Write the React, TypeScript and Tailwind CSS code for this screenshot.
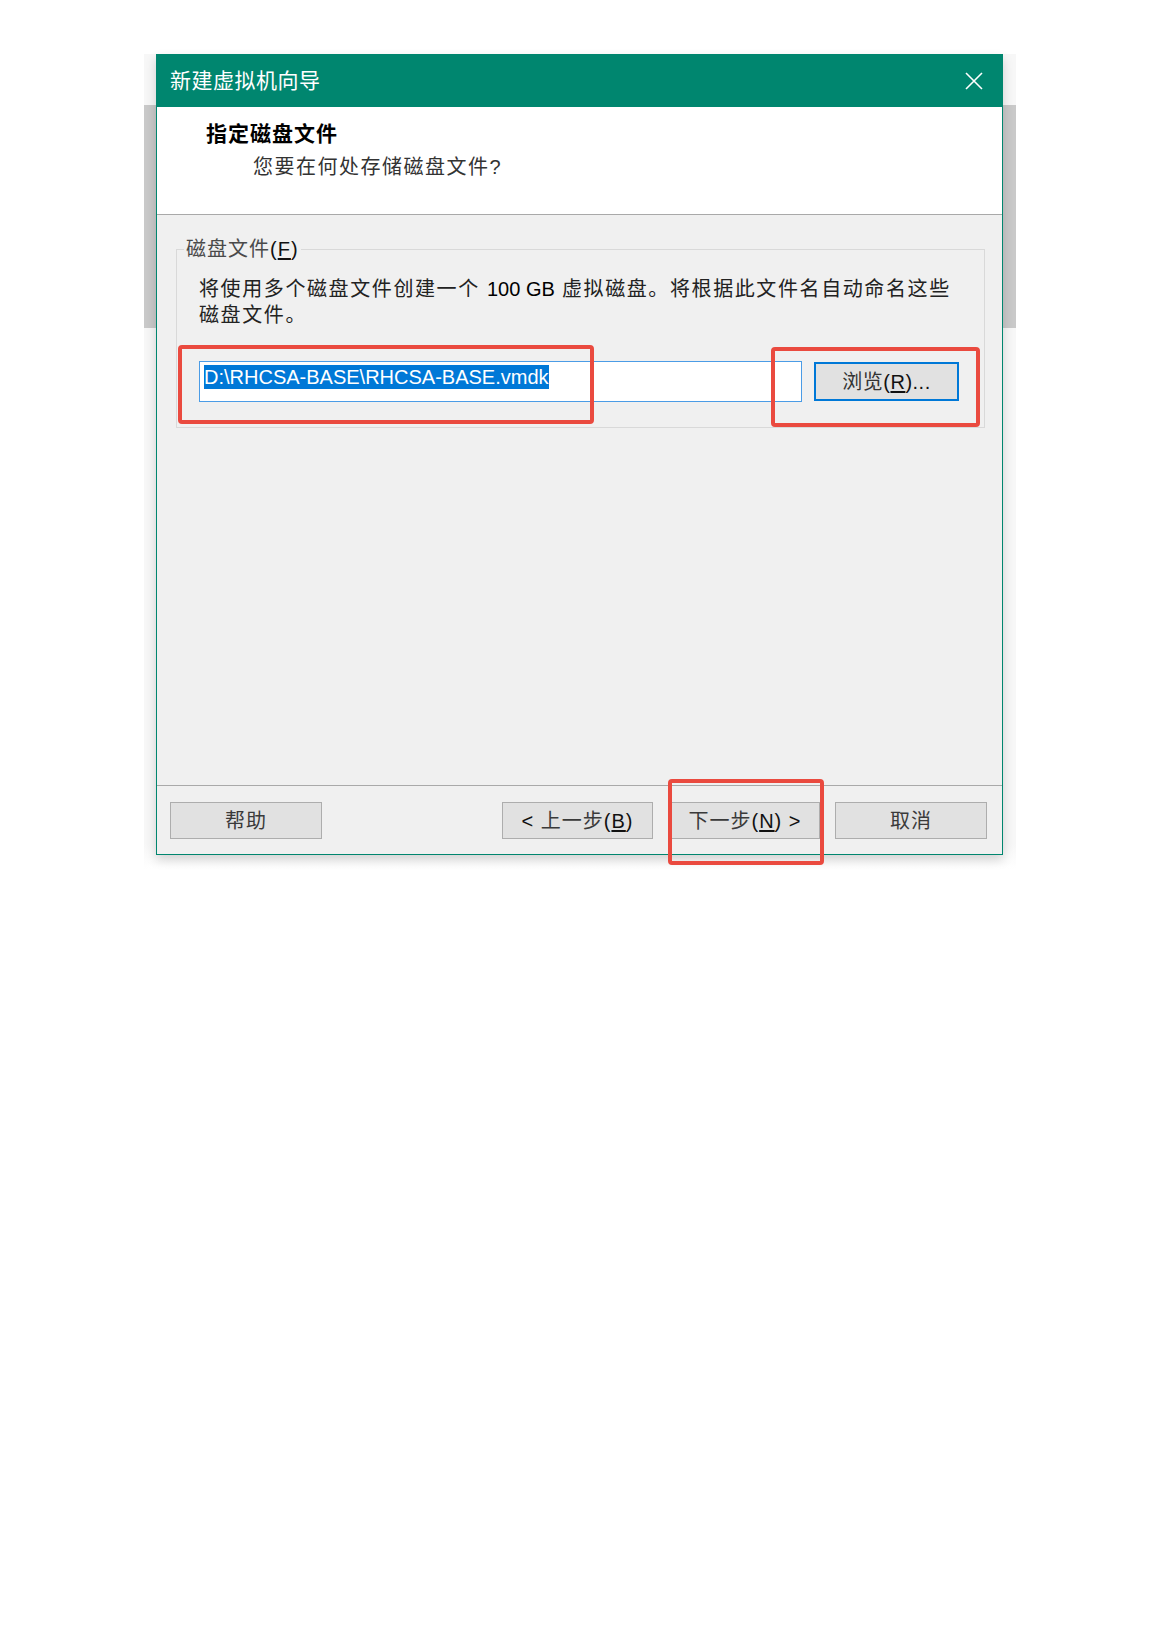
const cjk = "font-['Liberation_Sans','Noto_Sans_CJK_SC',sans-serif]";

const WinButton = ({ children, className = "" }: { children: React.ReactNode; className?: string }) => (
  <button
    className={`h-[37px] border border-[#adadad] bg-[#e1e1e1] text-[20px] leading-[24px] tracking-[1px] text-[#3a3a3a] ${className}`}
  >
    {children}
  </button>
);

// mnemonic like "(B)" with underlined letter, rendered darker like the Segoe UI part
const Key = ({ k }: { k: string }) => (
  <span className="text-[#111]">
    (<span className="underline underline-offset-2">{k}</span>)
  </span>
);

const Mark = ({ className }: { className: string }) => (
  <div className={`pointer-events-none absolute rounded-[4px] border-[4px] border-[#ea4a3f] ${className}`} />
);

export default function App() {
  return (
    <div className={`min-h-[1639px] w-[1159px] bg-white pt-[54px] ${cjk}`}>
      <div className="ml-[144px] w-[872px] pl-[12px] pr-[13px] pb-[14px] bg-[linear-gradient(to_bottom,#f7f7f7_51px,#c9c9c9_51px,#c9c9c9_274px,#f7f7f7_274px,#f7f7f7_790px,#ffffff_100%)]">
        <div className="relative w-[847px] border border-[#00866f] bg-[#f0f0f0] shadow-[0_5px_10px_rgba(0,0,0,0.16)]">
          {/* title bar */}
          <div className="flex h-[52px] items-center justify-between bg-[#00866f] pl-[13px] pr-[19px]">
            <span className="text-[21px] leading-[28px] tracking-[0.5px] text-white">新建虚拟机向导</span>
            <svg width="18" height="18" viewBox="0 0 18 18" className="block">
              <path d="M1 1 L17 17 M17 1 L1 17" stroke="#ffffff" strokeWidth="1.6" />
            </svg>
          </div>

          {/* header */}
          <div className="h-[108px] border-b border-[#a9a9a9] bg-white pt-[13px]">
            <div className="pl-[49px] text-[21px] font-bold leading-[28px] tracking-[1px] text-black">指定磁盘文件</div>
            <div className="mt-[5px] pl-[96px] text-[20px] leading-[28px] tracking-[1.5px] text-[#333]">
              您要在何处存储磁盘文件?
            </div>
          </div>

          {/* body */}
          <div className="h-[570px] pt-[22px]">
            <fieldset className="ml-[19px] mr-[17px] border border-[#d9d9d9] pl-[22px] pr-[20px] pb-[25px]">
              <legend className="-ml-[15px] px-[2px] text-[20px] leading-[24px] tracking-[1px] text-[#4a4a4a]">
                磁盘文件<Key k="F" />
              </legend>
              <p className="pt-[15px] text-[20px] leading-[26px] tracking-[1.6px] text-[#222]">
                将使用多个磁盘文件创建一个 <span className="tracking-normal text-black">100 GB</span> 虚拟磁盘。将根据此文件名自动命名这些
                <br />
                磁盘文件。
              </p>
              <div className="mt-[33px] flex items-center gap-[12px]">
                <div className="flex h-[41px] w-[603px] items-start border border-[#4b9ce6] bg-white pl-[4px] pt-[3px]">
                  <span className="bg-[#0078d7] text-[20px] leading-[24px] text-white">D:\RHCSA-BASE\RHCSA-BASE.vmdk</span>
                </div>
                <button className="h-[39px] w-[145px] border-2 border-[#0078d7] bg-[#e1e1e1] text-[20px] leading-[24px] tracking-[0.5px] text-[#333]">
                  浏览<Key k="R" />
                  <span className="text-[#111]">...</span>
                </button>
              </div>
            </fieldset>
          </div>

          {/* footer */}
          <div className="flex h-[69px] items-start border-t border-[#a9a9a9] pl-[13px] pr-[15px] pt-[16px]">
            <WinButton className="w-[152px]">帮助</WinButton>
            <div className="flex-1" />
            <WinButton className="w-[151px]">
              <span className="text-[#111]">&lt;</span> 上一步<Key k="B" />
            </WinButton>
            <WinButton className="ml-[17px] w-[150px]">
              下一步<Key k="N" /> <span className="text-[#111]">&gt;</span>
            </WinButton>
            <WinButton className="ml-[15px] w-[152px]">取消</WinButton>
          </div>

          {/* red annotation boxes */}
          <Mark className="left-[21px] top-[290px] h-[79px] w-[416px]" />
          <Mark className="left-[614px] top-[292px] h-[80px] w-[209px]" />
          <Mark className="left-[511px] top-[724px] h-[86px] w-[156px]" />
        </div>
      </div>
    </div>
  );
}
